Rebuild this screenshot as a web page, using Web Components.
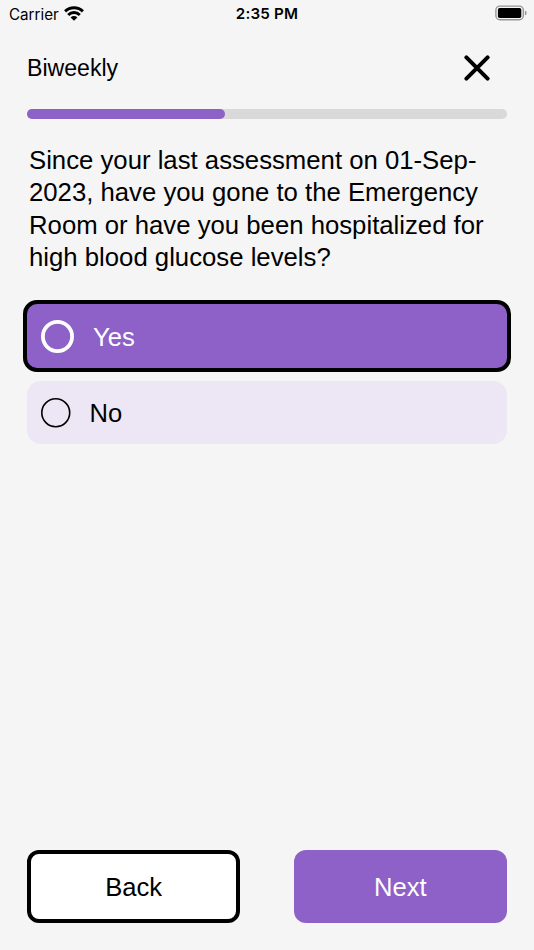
<!DOCTYPE html>
<html lang="en">
<head>
<meta charset="utf-8">
<meta name="viewport" content="width=device-width, initial-scale=1">
<title>Biweekly</title>
<style>
  body {
    margin: 0;
    background: #f5f5f5;
    color: #000;
    font-family: "Liberation Sans", Arial, sans-serif;
    --accent: #8d61c7;
    --accent-light: #ede7f5;
    --track: #d9d9d9;
  }
</style>
</head>
<body>
<survey-screen>
  <status-bar slot="status" carrier="Carrier" time="2:35 PM"></status-bar>
  <survey-header slot="header">Biweekly</survey-header>
  <progress-bar slot="progress" value="41.2"></progress-bar>
  <survey-question slot="question">Since your last assessment on 01-Sep-2023, have you gone to the Emergency Room or have you been hospitalized for high blood glucose levels?</survey-question>
  <survey-option selected>Yes</survey-option>
  <survey-option>No</survey-option>
  <survey-button slot="actions" variant="outline">Back</survey-button>
  <survey-button slot="actions">Next</survey-button>
</survey-screen>

<script>
class SurveyScreen extends HTMLElement {
  constructor() {
    super();
    this.attachShadow({ mode: 'open' });
  }

  connectedCallback() {
    this.shadowRoot.innerHTML = `
      <style>
        :host {
          display: flex;
          flex-direction: column;
          box-sizing: border-box;
          width: 100%;
          height: 100vh;
          overflow: hidden;
        }
        main {
          display: flex;
          flex-direction: column;
          flex: 1;
          padding: 0 27px 27px;
        }
        .options {
          display: flex;
          flex-direction: column;
          gap: 9px;
          margin: 27.4px -4px 0;
        }
        footer {
          display: grid;
          grid-template-columns: 1fr 1fr;
          gap: 53.4px;
          margin-top: auto;
        }
      </style>
      <slot name="status"></slot>
      <main>
        <slot name="header"></slot>
        <slot name="progress"></slot>
        <slot name="question"></slot>
        <div class="options"><slot></slot></div>
        <footer><slot name="actions"></slot></footer>
      </main>
    `;
  }
}

class StatusBar extends HTMLElement {
  constructor() {
    super();
    this.attachShadow({ mode: 'open' });
  }

  connectedCallback() {
    const carrier = this.getAttribute('carrier') || '';
    const time = this.getAttribute('time') || '';

    this.shadowRoot.innerHTML = `
      <style>
        :host {
          display: grid;
          grid-template-columns: 1fr auto 1fr;
          align-items: center;
          height: 28px;
          padding: 0 7px 0 9px;
          font-family: Inter, sans-serif;
          font-size: 15.2px;
        }
        .left {
          display: flex;
          align-items: center;
          gap: 5px;
        }
        .time {
          margin-right: 2px;
          padding-bottom: 1px;
          font-weight: 600;
          letter-spacing: 0.2px;
        }
        .right {
          display: flex;
          justify-content: flex-end;
        }
        svg {
          display: block;
        }
        .left svg {
          margin-top: -2px;
        }
        .right svg {
          margin-top: -2px;
        }
      </style>
      <div class="left">
        <span>${carrier}</span>
        <svg width="20" height="15" viewBox="0 0 20 15">
          <g fill="none" stroke="#000" stroke-width="2.9">
            <path d="M1.1 5.4A12.6 12.6 0 0 1 18.9 5.4"/>
            <path d="M4.2 8.9A8.1 8.1 0 0 1 15.8 8.9"/>
          </g>
          <path d="M6.6 11.4A4.8 4.8 0 0 1 13.4 11.4L10 14.8Z"/>
        </svg>
      </div>
      <span class="time">${time}</span>
      <div class="right">
        <svg width="32" height="16" viewBox="0 0 32 16">
          <rect x="0.9" y="1.1" width="27.4" height="13.7" rx="4" fill="none" stroke="#979797" stroke-width="1.4"/>
          <rect x="2.9" y="3" width="23.4" height="10" rx="1.8"/>
          <path d="M29.9 5.6Q31.7 6.4 31.7 8T29.9 10.4Z" fill="#979797"/>
        </svg>
      </div>
    `;
  }
}

class SurveyHeader extends HTMLElement {
  constructor() {
    super();
    this.attachShadow({ mode: 'open' });
  }

  connectedCallback() {
    this.shadowRoot.innerHTML = `
      <style>
        :host {
          display: flex;
          align-items: center;
          justify-content: space-between;
          height: 81px;
          padding-right: 17px;
          font-size: 23.1px;
        }
        svg {
          display: block;
          margin-top: -2px;
        }
      </style>
      <span><slot></slot></span>
      <svg width="26" height="26" viewBox="0 0 26 26">
        <path d="M2.4 2.4L23.6 23.6M23.6 2.4L2.4 23.6" fill="none" stroke="#000" stroke-width="4" stroke-linecap="round"/>
      </svg>
    `;
  }
}

class ProgressBar extends HTMLElement {
  constructor() {
    super();
    this.attachShadow({ mode: 'open' });
  }

  connectedCallback() {
    const value = this.getAttribute('value') || '0';

    this.shadowRoot.innerHTML = `
      <style>
        :host {
          display: block;
          height: 10px;
          border-radius: 5px;
          background: var(--track);
        }
        .fill {
          height: 100%;
          border-radius: 5px;
          background: var(--accent);
        }
      </style>
      <div class="fill" style="width: ${value}%"></div>
    `;
  }
}

class SurveyQuestion extends HTMLElement {
  constructor() {
    super();
    this.attachShadow({ mode: 'open' });
  }

  connectedCallback() {
    this.shadowRoot.innerHTML = `
      <style>
        :host {
          display: block;
          margin-top: 25.2px;
          padding: 0 2px;
          font-size: 25.72px;
          line-height: 32.2px;
        }
      </style>
      <slot></slot>
    `;
  }
}

class SurveyOption extends HTMLElement {
  constructor() {
    super();
    this.attachShadow({ mode: 'open' });
  }

  connectedCallback() {
    // the selected ring is larger and heavier than the idle one
    const selected = this.hasAttribute('selected');
    const size = selected ? 33 : 29.5;
    const stroke = selected ? 3.8 : 1.6;

    this.shadowRoot.innerHTML = `
      <style>
        :host {
          display: flex;
          align-items: center;
          box-sizing: border-box;
          gap: 19px;
          height: 63px;
          margin: 0 4px;
          padding: 0 14px;
          border-radius: 14px;
          background: var(--accent-light);
          font-size: 25.6px;
        }
        :host([selected]) {
          height: 71.5px;
          margin: 0;
          border: 4px solid #000;
          background: var(--accent);
          color: #fff;
        }
        svg {
          overflow: visible;
        }
        .label {
          padding-top: 2px;
        }
      </style>
      <svg width="${size}" height="${size}">
        <circle cx="${size / 2}" cy="${size / 2}" r="${(size - stroke) / 2}" fill="none" stroke="currentColor" stroke-width="${stroke}"/>
      </svg>
      <span class="label"><slot></slot></span>
    `;
  }
}

class SurveyButton extends HTMLElement {
  constructor() {
    super();
    this.attachShadow({ mode: 'open' });
  }

  connectedCallback() {
    this.shadowRoot.innerHTML = `
      <style>
        :host {
          display: flex;
          align-items: center;
          justify-content: center;
          box-sizing: border-box;
          height: 73.5px;
          border-radius: 12px;
          background: var(--accent);
          color: #fff;
          font-size: 25.6px;
        }
        :host([variant="outline"]) {
          border: 4px solid #000;
          background: #fff;
          color: #000;
        }
        span {
          padding-top: 2px;
        }
      </style>
      <span><slot></slot></span>
    `;
  }
}

customElements.define('survey-screen', SurveyScreen);
customElements.define('status-bar', StatusBar);
customElements.define('survey-header', SurveyHeader);
customElements.define('progress-bar', ProgressBar);
customElements.define('survey-question', SurveyQuestion);
customElements.define('survey-option', SurveyOption);
customElements.define('survey-button', SurveyButton);
</script>
</body>
</html>
